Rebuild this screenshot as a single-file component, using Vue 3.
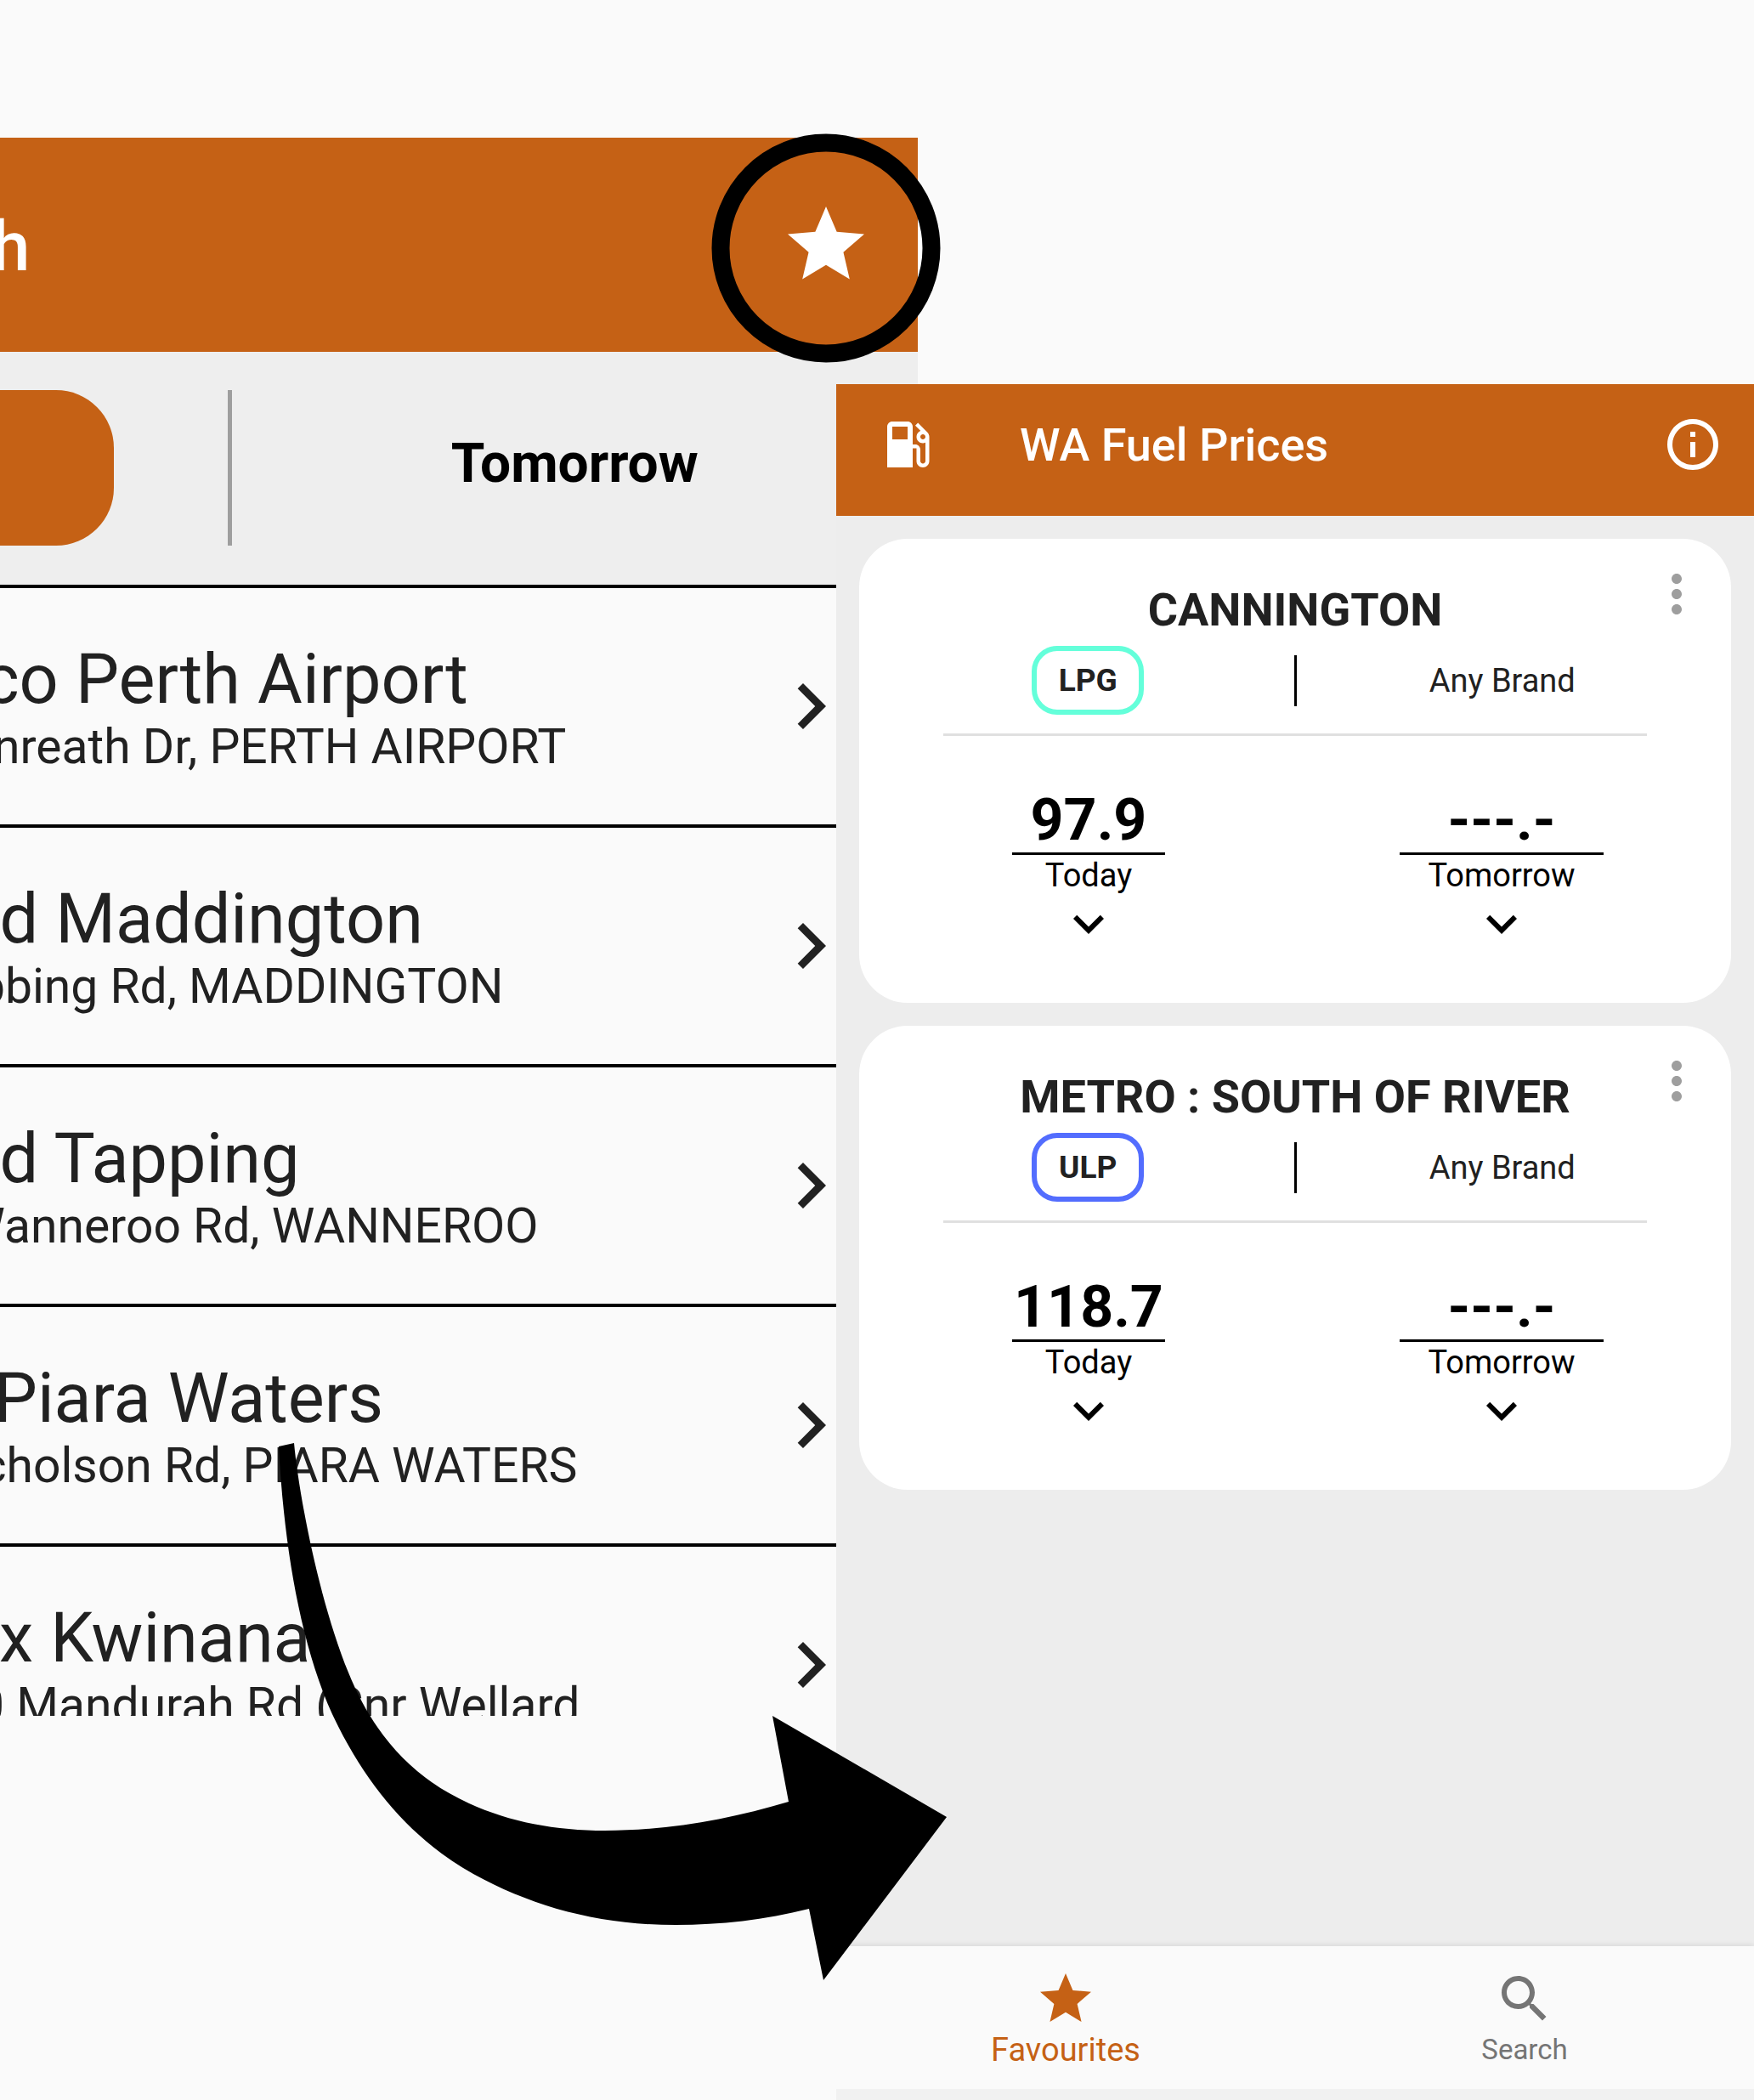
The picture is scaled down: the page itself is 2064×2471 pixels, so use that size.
<script setup>
const stations = [
  { name: 'Costco Perth Airport', address: '142 Dunreath Dr, PERTH AIRPORT' },
  { name: 'United Maddington', address: '46 Stebbing Rd, MADDINGTON' },
  { name: 'United Tapping', address: '1387 Wanneroo Rd, WANNEROO' },
  { name: 'Vibe Piara Waters', address: '225 Nicholson Rd, PIARA WATERS' },
  { name: 'Caltex Kwinana', address: 'Lot 100 Mandurah Rd (Cnr Wellard' },
]

const favourites = [
  { place: 'CANNINGTON', fuel: 'LPG', brand: 'Any Brand', today: '97.9', tomorrow: '---.-' },
  { place: 'METRO : SOUTH OF RIVER', fuel: 'ULP', brand: 'Any Brand', today: '118.7', tomorrow: '---.-' },
]
</script>

<template>
  <main class="stage">
    <section class="results">
      <div class="screen">
        <header class="bar">
          <h1 class="bar-title">Search</h1>
          <button class="icon-button" type="button" aria-label="Add to favourites">
            <svg class="icon-large" viewBox="0 0 24 24">
              <path d="M12 17.27L18.18 21l-1.64-7.03L22 9.24l-7.19-.61L12 2 9.19 8.63 2 9.24l5.46 4.73L5.82 21z" />
            </svg>
          </button>
        </header>
        <div class="days">
          <button class="day active" type="button">Today</button>
          <span class="days-rule"></span>
          <button class="day" type="button">Tomorrow</button>
        </div>
        <ul class="stations">
          <li v-for="s in stations" :key="s.name" class="station">
            <div class="station-text">
              <div class="station-name">{{ s.name }}</div>
              <div class="station-address">{{ s.address }}</div>
            </div>
            <svg class="icon-large" viewBox="0 0 24 24" aria-hidden="true">
              <path d="M10 6L8.59 7.41 13.17 12l-4.58 4.59L10 18l6-6z" />
            </svg>
          </li>
        </ul>
      </div>
    </section>

    <section class="favourites">
      <header class="app-bar">
        <svg class="icon" viewBox="0 0 24 24" aria-hidden="true">
          <path d="M19.77 7.23l.01-.01-3.72-3.72L15 4.56l2.11 2.11c-.94.36-1.61 1.26-1.61 2.33 0 1.38 1.12 2.5 2.5 2.5.36 0 .69-.08 1-.21v7.21c0 .55-.45 1-1 1s-1-.45-1-1V14c0-1.1-.9-2-2-2h-1V5c0-1.1-.9-2-2-2H6c-1.1 0-2 .9-2 2v16h10v-7.5h1.5v5c0 1.38 1.12 2.5 2.5 2.5s2.5-1.12 2.5-2.5V9c0-.69-.28-1.32-.73-1.77zM12 10H6V5h6v5zm6 0c-.55 0-1-.45-1-1s.45-1 1-1 1 .45 1 1-.45 1-1 1z" />
        </svg>
        <h2 class="app-title">WA Fuel Prices</h2>
        <button class="icon-button" type="button" aria-label="About">
          <svg class="icon" viewBox="0 0 24 24">
            <path d="M11 7h2v2h-2zm0 4h2v6h-2zm1-9C6.48 2 2 6.48 2 12s4.48 10 10 10 10-4.48 10-10S17.52 2 12 2zm0 18c-4.41 0-8-3.59-8-8s3.59-8 8-8 8 3.59 8 8-3.59 8-8 8z" />
          </svg>
        </button>
      </header>

      <div class="cards">
        <article v-for="f in favourites" :key="f.place" class="card">
          <button class="icon-button more" type="button" aria-label="More options">
            <svg class="icon" viewBox="0 0 24 24">
              <path d="M12 8c1.1 0 2-.9 2-2s-.9-2-2-2-2 .9-2 2 .9 2 2 2zm0 2c-1.1 0-2 .9-2 2s.9 2 2 2 2-.9 2-2-.9-2-2-2zm0 6c-1.1 0-2 .9-2 2s.9 2 2 2 2-.9 2-2-.9-2-2-2z" />
            </svg>
          </button>
          <h3 class="place">{{ f.place }}</h3>
          <div class="details">
            <span class="fuel" :class="f.fuel.toLowerCase()">{{ f.fuel }}</span>
            <span class="details-rule"></span>
            <span class="brand">{{ f.brand }}</span>
          </div>
          <hr class="divider" />
          <div class="prices">
            <button class="price today" type="button">
              <span class="amount">{{ f.today }}</span>
              <span class="when">Today</span>
              <svg class="icon" viewBox="0 0 24 24" aria-hidden="true">
                <path d="M16.59 8.59L12 13.17 7.41 8.59 6 10l6 6 6-6z" />
              </svg>
            </button>
            <button class="price tomorrow" type="button">
              <span class="amount">{{ f.tomorrow }}</span>
              <span class="when">Tomorrow</span>
              <svg class="icon" viewBox="0 0 24 24" aria-hidden="true">
                <path d="M16.59 8.59L12 13.17 7.41 8.59 6 10l6 6 6-6z" />
              </svg>
            </button>
          </div>
        </article>
      </div>

      <nav class="tabs">
        <a class="tab current" href="#favourites">
          <svg class="icon" viewBox="0 0 24 24" aria-hidden="true">
            <path d="M12 17.27L18.18 21l-1.64-7.03L22 9.24l-7.19-.61L12 2 9.19 8.63 2 9.24l5.46 4.73L5.82 21z" />
          </svg>
          Favourites
        </a>
        <a class="tab" href="#search">
          <svg class="icon" viewBox="0 0 24 24" aria-hidden="true">
            <path d="M15.5 14h-.79l-.28-.27C15.41 12.59 16 11.11 16 9.5 16 5.91 13.09 3 9.5 3S3 5.91 3 9.5 5.91 16 9.5 16c1.61 0 3.09-.59 4.23-1.57l.27.28v.79l5 4.99L20.49 19l-4.99-5zm-6 0C7.01 14 5 11.99 5 9.5S7.01 5 9.5 5 14 7.01 14 9.5 11.99 14 9.5 14z" />
          </svg>
          Search
        </a>
      </nav>
    </section>

    <svg class="ring" viewBox="0 0 270 270" aria-hidden="true">
      <path d="M243 68h6v134h-6z" fill="#fff" />
      <circle cx="135" cy="135" r="124" fill="none" stroke="#000" stroke-width="21" />
    </svg>
    <svg class="arrow" viewBox="328 1698 786 632" aria-hidden="true">
      <path d="M328 1702L346 1698C352 1760 375 1882 410 1968C439 2040 485 2092 552 2122C600 2144 654 2154 712 2154C785 2154 858 2141 928 2120L909 2019L1114 2138L969 2330L952 2246C900 2259 848 2265 795 2265C705 2265 628 2244 557 2205C485 2165 430 2100 391 2017C352 1930 334 1815 328 1702Z" />
    </svg>
  </main>
</template>

<style>
body {
  margin: 0;
  background: #fafafa;
}
</style>

<style scoped>
.stage {
  position: relative;
  display: grid;
  grid-template-columns: 984fr 96fr 984fr;
  min-height: 100vh;
  overflow: hidden;
  background: #fafafa;
  color: #212121;
  font-family: Roboto, "Liberation Sans", sans-serif;
}

h1, h2, h3, ul {
  margin: 0;
  padding: 0;
}

button {
  padding: 0;
  border: 0;
  background: none;
  color: inherit;
  font: inherit;
}

svg {
  display: block;
  flex: none;
  fill: currentColor;
}

.icon {
  width: 72px;
  height: 72px;
}

.icon-large {
  width: 108px;
  height: 108px;
}

/* Search results, scrolled out past the left edge */
.results {
  grid-area: 1 / 1 / 2 / 3;
  display: flex;
  justify-content: flex-end;
  align-items: flex-start;
  min-width: 0;
  margin-top: 162px;
  overflow: hidden;
}

.screen {
  flex: none;
  width: 1620px;
}

.bar {
  display: flex;
  align-items: center;
  justify-content: space-between;
  box-sizing: border-box;
  height: 252px;
  padding: 0 54px 0 324px;
  background: #c56115;
  color: #fff;
}

.bar-title {
  padding-top: 4px;
  font-size: 81px;
  font-weight: 500;
}

.days {
  display: grid;
  grid-template-columns: 1fr 5px 1fr;
  padding: 45px 0 46px;
  background: #eee;
}

.days-rule {
  background: #9e9e9e;
}

.day {
  justify-self: center;
  box-sizing: border-box;
  width: 540px;
  height: 183px;
  padding-bottom: 10px;
  border-radius: 68px;
  color: #000;
  font-size: 64px;
  font-weight: 700;
}

.day.active {
  background: #c56115;
  color: #fff;
}

.stations {
  max-height: 1331px;
  overflow: hidden;
  list-style: none;
}

.station {
  display: flex;
  align-items: center;
  justify-content: space-between;
  box-sizing: border-box;
  height: 282px;
  padding: 0 72px 0 353px;
  border-top: 4px solid #000;
  white-space: nowrap;
}

.station-text {
  padding-top: 4px;
}

.station-name {
  font-size: 81px;
  line-height: 92px;
}

.station-address {
  font-size: 57px;
  line-height: 66px;
}

/* Favourites screen */
.favourites {
  z-index: 1;
  grid-area: 1 / 2 / 2 / 4;
  display: flex;
  flex-direction: column;
  min-width: 0;
  margin-top: 452px;
  background: #ededed;
}

.app-bar {
  display: flex;
  align-items: center;
  padding: 35px 36px 48px 48px;
  background: #c56115;
  color: #fff;
}

.app-title {
  flex: 1;
  padding: 2px 0 0 96px;
  font-size: 54px;
  font-weight: 500;
  line-height: 70px;
}

.cards {
  display: flex;
  flex: 1;
  flex-direction: column;
  gap: 27px;
  padding: 27px;
}

.card {
  position: relative;
  padding: 52px 27px 57px;
  border-radius: 57px;
  background: #fff;
  text-align: center;
}

.more {
  position: absolute;
  top: 29px;
  right: 28px;
  color: #9e9e9e;
}

.place {
  font-size: 54px;
  font-weight: 700;
  line-height: 64px;
}

.details {
  display: grid;
  grid-template-columns: 1fr 3px 1fr;
  align-items: center;
  justify-items: center;
  margin-top: 10px;
}

.fuel {
  box-sizing: border-box;
  width: 132px;
  padding-top: 1px;
  border: 6px solid;
  border-radius: 30px;
  font-size: 37px;
  font-weight: 700;
  line-height: 68px;
}

.fuel.lpg {
  border-color: #64ffda;
}

.fuel.ulp {
  border-color: #536dfe;
}

.brand {
  padding-top: 1px;
  font-size: 38px;
}

.details-rule {
  width: 3px;
  height: 60px;
  background: #000;
}

.divider {
  height: 3px;
  margin: 22px 72px 61px;
  border: 0;
  background: #e0e0e0;
}

.prices {
  display: grid;
  grid-template-columns: 1fr 1fr;
  justify-items: center;
  color: #000;
}

.price {
  display: flex;
  flex-direction: column;
  align-items: center;
}

.price.today {
  width: 180px;
}

.price.tomorrow {
  width: 240px;
}

.amount {
  align-self: stretch;
  margin-bottom: 3px;
  border-bottom: 3px solid #000;
  font-size: 68px;
  font-weight: 700;
  line-height: 76px;
}

.when {
  font-size: 38px;
  line-height: 42px;
}

.tabs {
  display: grid;
  grid-template-columns: 1fr 1fr;
  border-bottom: 13px solid #f1f1f1;
  background: #fafafa;
  box-shadow: 0 -2px 6px rgba(0, 0, 0, 0.08);
  clip-path: inset(-12px 0 0 0);
}

.tab {
  display: flex;
  flex-direction: column;
  align-items: center;
  gap: 2px;
  padding: 26px 0 24px;
  color: #757575;
  font-size: 33px;
  line-height: 44px;
  text-decoration: none;
}

.tab.current {
  color: #c56115;
  font-size: 38px;
}

/* Annotations lying over both screens */
.ring,
.arrow {
  position: absolute;
  z-index: 2;
  color: #000;
}

.ring {
  top: 157px;
  left: 837px;
  width: 270px;
}

.arrow {
  top: 1698px;
  left: 328px;
  width: 786px;
}
</style>
